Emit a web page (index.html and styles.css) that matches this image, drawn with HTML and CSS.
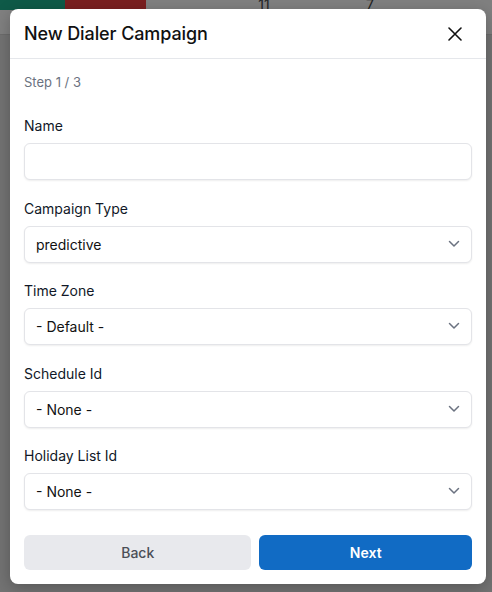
FILE: index.html
```html
<!doctype html>
<html lang="en">

<head>
  <meta charset="UTF-8" />
  <meta name="viewport" content="width=device-width, initial-scale=1" />
  <title>New Dialer Campaign</title>
  <link rel="stylesheet" href="styles.css">
</head>

<body>
  <!-- Page behind the dialog -->
  <div class="backdrop">
    <div class="stats-row">
      <div class="stat stat-green"></div>
      <div class="stat stat-red"></div>
      <div class="stat stat-num stat-a">11</div>
      <div class="stat stat-num stat-b">7</div>
    </div>
    <div class="toolbar"></div>
  </div>

  <!-- Dialog -->
  <div class="modal">
    <div class="modal-header">
      <h2 class="modal-title">New Dialer Campaign</h2>
      <button class="close-button" aria-label="Close">
        <svg width="14" height="14" viewBox="0 0 14 14" fill="none" stroke="#111" stroke-width="1.6" stroke-linecap="round">
          <path d="M1 1l12 12M13 1L1 13" />
        </svg>
      </button>
    </div>

    <div class="modal-body">
      <div class="step">Step 1 / 3</div>

      <div class="field">
        <label class="field-label" for="name">Name</label>
        <input type="text" id="name" class="field-input" />
      </div>

      <div class="field">
        <label class="field-label" for="type">Campaign Type</label>
        <div class="select-wrap">
          <select id="type" class="field-input field-select">
            <option>predictive</option>
          </select>
          <svg class="chevron" width="12" height="8" viewBox="0 0 12 8" fill="none" stroke="#6b7280" stroke-width="1.5" stroke-linecap="round" stroke-linejoin="round">
            <path d="M1.5 1.5L6 6l4.5-4.5" />
          </svg>
        </div>
      </div>

      <div class="field">
        <label class="field-label" for="tz">Time Zone</label>
        <div class="select-wrap">
          <select id="tz" class="field-input field-select">
            <option>- Default -</option>
          </select>
          <svg class="chevron" width="12" height="8" viewBox="0 0 12 8" fill="none" stroke="#6b7280" stroke-width="1.5" stroke-linecap="round" stroke-linejoin="round">
            <path d="M1.5 1.5L6 6l4.5-4.5" />
          </svg>
        </div>
      </div>

      <div class="field">
        <label class="field-label" for="schedule">Schedule Id</label>
        <div class="select-wrap">
          <select id="schedule" class="field-input field-select">
            <option>- None -</option>
          </select>
          <svg class="chevron" width="12" height="8" viewBox="0 0 12 8" fill="none" stroke="#6b7280" stroke-width="1.5" stroke-linecap="round" stroke-linejoin="round">
            <path d="M1.5 1.5L6 6l4.5-4.5" />
          </svg>
        </div>
      </div>

      <div class="field">
        <label class="field-label" for="holiday">Holiday List Id</label>
        <div class="select-wrap">
          <select id="holiday" class="field-input field-select">
            <option>- None -</option>
          </select>
          <svg class="chevron" width="12" height="8" viewBox="0 0 12 8" fill="none" stroke="#6b7280" stroke-width="1.5" stroke-linecap="round" stroke-linejoin="round">
            <path d="M1.5 1.5L6 6l4.5-4.5" />
          </svg>
        </div>
      </div>

      <div class="actions">
        <button class="btn btn-back">Back</button>
        <button class="btn btn-next">Next</button>
      </div>
    </div>
  </div>
</body>

</html>
```

FILE: styles.css
```css
body {
  font-family: Inter, "Noto Sans", sans-serif;
  margin: 0;
  background-color: #737373;
  color: #111827;
  height: 592px;
  overflow: hidden;
}

.backdrop {
  display: flex;
  flex-direction: column;
}

.stats-row {
  display: flex;
  height: 10px;
  background-color: #808080;
  overflow: hidden;
}

.stat {
  height: 10px;
}

.stat-green {
  width: 65px;
  background-color: #0f5a48;
}

.stat-red {
  width: 81px;
  background-color: #7a1f20;
}

.stat-num {
  font-size: 14px;
  line-height: 10px;
  color: #1f1f1f;
  text-align: center;
}

.stat-a {
  width: 14px;
  margin-left: 111px;
}

.stat-b {
  width: 10px;
  margin-left: 94px;
}

.toolbar {
  height: 24px;
  background-color: #808080;
  border-bottom: 1px solid #6c6c6c;
}

.modal {
  position: absolute;
  top: 9px;
  left: 10px;
  width: 476px;
  height: 575px;
  background-color: white;
  border-radius: 8px;
  box-shadow: 0 4px 16px rgba(0, 0, 0, 0.25);
  box-sizing: border-box;
}

.modal-header {
  display: flex;
  align-items: center;
  justify-content: space-between;
  height: 49px;
  padding: 0 24px 0 14px;
  border-bottom: 1px solid #e5e7eb;
}

.modal-title {
  margin: 0;
  font-size: 18px;
  font-weight: 500;
  color: #111;
  letter-spacing: -0.1px;
}

.close-button {
  display: flex;
  align-items: center;
  justify-content: center;
  width: 24px;
  height: 24px;
  padding: 0;
  margin-right: -5px;
  border: none;
  background: none;
  cursor: pointer;
}

.modal-body {
  padding: 14px 14px 14px;
}

.step {
  font-size: 13px;
  line-height: 18px;
  color: #6b7280;
  margin-bottom: 25px;
}

.field {
  display: flex;
  flex-direction: column;
  gap: 7px;
  margin-bottom: 18.5px;
}

.field-label {
  font-size: 14px;
  line-height: 20px;
  color: #111827;
}

.field-input {
  width: 100%;
  height: 37px;
  padding: 0 11px;
  font-family: Inter, "Noto Sans", sans-serif;
  font-size: 14px;
  color: #111;
  background-color: white;
  border: 1px solid #e3e4e8;
  border-radius: 6px;
  box-shadow: 0 1px 2px rgba(0, 0, 0, 0.07);
  box-sizing: border-box;
}

.field-input:focus {
  outline: none;
  border-color: #116bc4;
}

.select-wrap {
  position: relative;
}

.field-select {
  appearance: none;
  -webkit-appearance: none;
}

.chevron {
  position: absolute;
  right: 12px;
  top: 14px;
  pointer-events: none;
}

.actions {
  display: grid;
  grid-template-columns: 228fr 213fr;
  gap: 8px;
  margin-top: 25px;
}

.btn {
  height: 35px;
  border: none;
  border-radius: 6px;
  font-family: Inter, "Noto Sans", sans-serif;
  font-size: 14px;
  cursor: pointer;
}

.btn-back {
  background-color: #e8e9ed;
  color: #4b4f57;
  font-weight: 500;
}

.btn-next {
  background-color: #116bc4;
  color: white;
  font-weight: 600;
}
```
